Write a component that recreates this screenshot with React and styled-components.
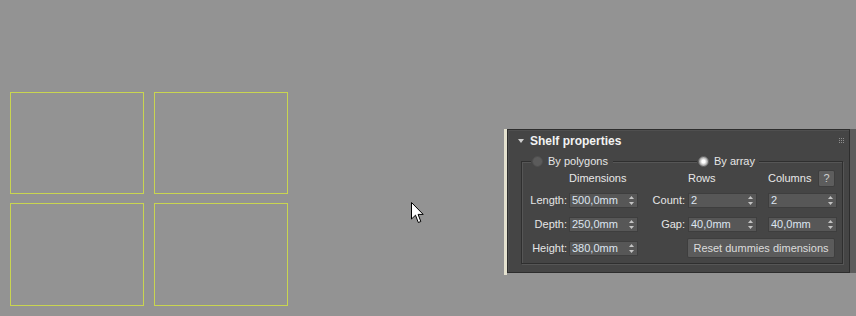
import { Fragment } from 'react';
import styled, { createGlobalStyle } from 'styled-components';

const GlobalStyle = createGlobalStyle`
  html, body {
    margin: 0;
    padding: 0;
    background: #939393;
  }
  body {
    font-family: "Liberation Sans", Arial, sans-serif;
    font-size: 11px;
  }
`;

const DUMMIES = [1, 2, 3, 4];

const ROWS = [
  { label: 'Length:', dim: '500,0mm', rowLabel: 'Count:', row: '2', col: '2' },
  { label: 'Depth:', dim: '250,0mm', rowLabel: 'Gap:', row: '40,0mm', col: '40,0mm' },
];

function SpinArrows() {
  return (
    <svg width="5" height="9" viewBox="0 0 5 9">
      <path d="M2.5 0 L5 3 L0 3 Z" fill="#c4c4c4" />
      <path d="M0 6 L5 6 L2.5 9 Z" fill="#c4c4c4" />
    </svg>
  );
}

function Spinner({ value }) {
  return (
    <SpinBox>
      <SpinValue>{value}</SpinValue>
      <SpinArrows />
    </SpinBox>
  );
}

function Cursor() {
  return (
    <CursorIcon width="13" height="22" viewBox="0 0 13 22">
      <path
        d="M0.5 0.5 L0.5 17 L4.5 13.2 L7.3 20.5 L9.8 19.5 L7.1 12.4 L12.2 12.4 Z"
        fill="#fff"
        stroke="#000"
        strokeWidth="1"
      />
    </CursorIcon>
  );
}

export default function App() {
  return (
    <>
      <GlobalStyle />
      <Page>
        <DummyGrid>
          {DUMMIES.map((d) => (
            <Dummy key={d} />
          ))}
        </DummyGrid>

        <Panel>
          <Stripe />
          <Rollout>
            <RolloutHeader>
              <TitleWrap>
                <svg width="6" height="4" viewBox="0 0 6 4">
                  <path d="M0 0 L6 0 L3 4 Z" fill="#cfcfcf" />
                </svg>
                <Title>Shelf properties</Title>
              </TitleWrap>
              <Grip>
                {Array.from({ length: 9 }).map((_, i) => (
                  <GripDot key={i} />
                ))}
              </Grip>
            </RolloutHeader>

            <GroupBox>
              <Legend>
                <RadioItem>
                  <RadioDot />
                  <span>By polygons</span>
                </RadioItem>
                <RadioItem>
                  <RadioDot $checked />
                  <span>By array</span>
                </RadioItem>
              </Legend>

              <FieldGrid>
                <span />
                <ColHead>Dimensions</ColHead>
                <span />
                <ColHead>Rows</ColHead>
                <span />
                <ColHead>
                  Columns
                  <HelpButton>?</HelpButton>
                </ColHead>

                {ROWS.map((r) => (
                  <Fragment key={r.label}>
                    <FieldLabel>{r.label}</FieldLabel>
                    <Spinner value={r.dim} />
                    <FieldLabel $wide>{r.rowLabel}</FieldLabel>
                    <Spinner value={r.row} />
                    <span />
                    <Spinner value={r.col} />
                  </Fragment>
                ))}

                <FieldLabel $center>Height:</FieldLabel>
                <CenterCell>
                  <Spinner value="380,0mm" />
                </CenterCell>
                <ResetButton>Reset dummies dimensions</ResetButton>
              </FieldGrid>
            </GroupBox>
          </Rollout>
          <Gutter />
        </Panel>

        <Cursor />
      </Page>
    </>
  );
}

const Page = styled.div`
  position: relative;
  display: flex;
  align-items: flex-start;
  width: 856px;
  height: 316px;
  overflow: hidden;
  background: #939393;
`;

const DummyGrid = styled.div`
  display: grid;
  grid-template-columns: 134px 134px;
  grid-template-rows: 102px 103px;
  column-gap: 10px;
  row-gap: 9px;
  margin: 92px 0 0 10px;
`;

const Dummy = styled.div`
  box-sizing: border-box;
  border: 1px solid #c9d550;
`;

const Panel = styled.div`
  display: flex;
  margin: 129px 0 0 216px;
  height: 144px;
`;

const Stripe = styled.div`
  width: 3px;
  height: 146px;
  background: #e4e1cf;
`;

const Rollout = styled.div`
  box-sizing: border-box;
  width: 343px;
  height: 144px;
  background: #454545;
  border: 1px solid #2d2d2d;
  box-shadow: inset 1px 1px 0 #4f4f4f;
`;

const Gutter = styled.div`
  width: 6px;
  background: #5c5c5c;
`;

const RolloutHeader = styled.div`
  display: flex;
  align-items: center;
  justify-content: space-between;
  height: 22px;
  padding: 0 5px 0 10px;
`;

const TitleWrap = styled.div`
  display: flex;
  align-items: center;
  gap: 6px;
`;

const Title = styled.span`
  color: #f2f2f2;
  font-weight: bold;
  font-size: 12px;
`;

const Grip = styled.div`
  display: grid;
  grid-template-columns: repeat(3, 1px);
  grid-template-rows: repeat(3, 1px);
  gap: 1px;
  margin-top: -2px;
`;

const GripDot = styled.i`
  display: block;
  width: 1px;
  height: 1px;
  background: #8e8e8e;
`;

const GroupBox = styled.div`
  box-sizing: border-box;
  height: 103px;
  margin: 9px 6px 0 13px;
  border: 1px solid #2f2f2f;
  box-shadow: 1px 1px 0 #565656, inset 1px 1px 0 #565656;
`;

const Legend = styled.div`
  display: grid;
  grid-template-columns: 82px auto;
  column-gap: 84px;
  justify-content: start;
  height: 15px;
  margin-top: -8px;
  padding-left: 9px;
`;

const RadioItem = styled.div`
  display: flex;
  align-items: center;
  gap: 5px;
  padding: 0 4px 0 1px;
  background: #454545;
  color: #e6e6e6;
  line-height: 15px;
`;

const RadioDot = styled.i`
  display: block;
  box-sizing: border-box;
  width: 11px;
  height: 11px;
  border-radius: 50%;
  border: 1px solid ${(p) => (p.$checked ? '#6a6a6a' : '#4e4e4e')};
  background: ${(p) =>
    p.$checked
      ? 'radial-gradient(circle, #ffffff 0 1.6px, #d8d8d8 2.6px, #9a9a9a 4.5px)'
      : '#5b5b5b'};
`;

const FieldGrid = styled.div`
  display: grid;
  grid-template-columns: 47px 69px 50px 69px 11px 69px;
  grid-template-rows: 23px 24px 21px 20px;
  align-items: start;
  margin-top: 1px;
  color: #e6e6e6;
`;

const ColHead = styled.div`
  display: flex;
  align-items: center;
  justify-content: space-between;
  height: 17px;
  line-height: 17px;
  color: #e8e8e8;
`;

const HelpButton = styled.button`
  box-sizing: border-box;
  width: 17px;
  height: 17px;
  margin-right: 2px;
  padding: 0;
  border: 1px solid #3e3e3e;
  border-radius: 2px;
  background: #5d5d5d;
  color: #cfcfcf;
  font-family: "Liberation Sans", Arial, sans-serif;
  font-size: 11px;
  line-height: 15px;
`;

const FieldLabel = styled.span`
  align-self: ${(p) => (p.$center ? 'center' : 'start')};
  padding-right: ${(p) => (p.$wide ? '3px' : '2px')};
  text-align: right;
  line-height: 15px;
  white-space: nowrap;
`;

const CenterCell = styled.div`
  align-self: center;
`;

const SpinBox = styled.div`
  box-sizing: border-box;
  display: flex;
  align-items: center;
  justify-content: space-between;
  width: 69px;
  height: 15px;
  padding: 0 3px 0 2px;
  background: #575757;
  border: 1px solid #3e3e3e;
`;

const SpinValue = styled.span`
  color: #dde5f0;
  font-size: 11px;
  line-height: 13px;
`;

const ResetButton = styled.button`
  grid-column: 3 / 7;
  justify-self: end;
  box-sizing: border-box;
  width: 148px;
  height: 20px;
  margin-right: 2px;
  padding: 0;
  border: 1px solid #3e3e3e;
  border-radius: 2px;
  background: #5b5b5b;
  color: #dcdcdc;
  font-family: "Liberation Sans", Arial, sans-serif;
  font-size: 11px;
`;

const CursorIcon = styled.svg`
  position: absolute;
  left: 411px;
  top: 202px;
`;
